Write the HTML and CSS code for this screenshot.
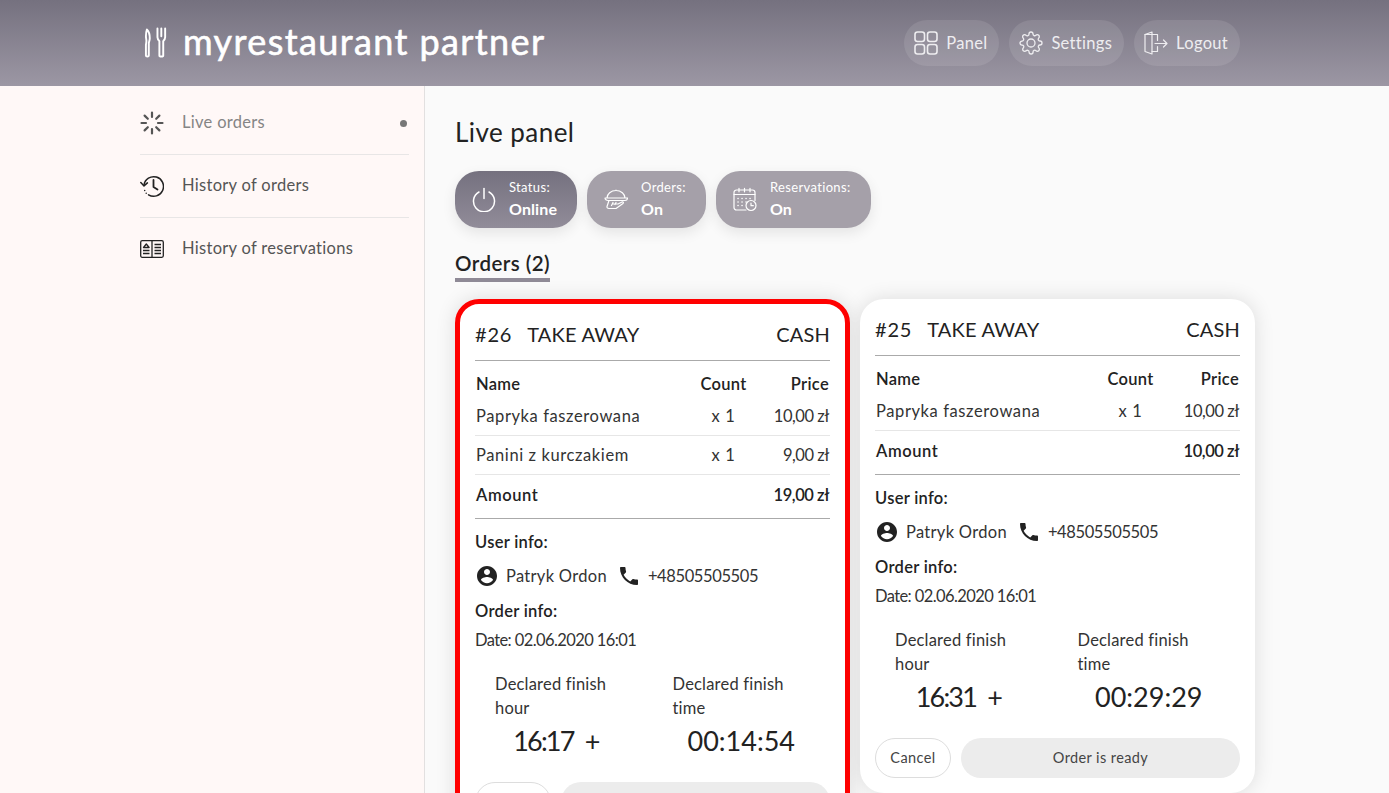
FILE: index.html
```html
<!DOCTYPE html>
<html lang="en">

<head>
  <meta charset="UTF-8">
  <title>myrestaurant partner</title>
  <link rel="stylesheet" href="styles.css">
</head>

<body>
  <svg class="sprites" width="0" height="0">
    <symbol id="i-user" viewBox="0 0 24 24">
      <path fill="currentColor" d="M12 2C6.48 2 2 6.48 2 12s4.480 10 10 10 10-4.48 10-10S17.520 2 12 2zm0 3c1.660 0 3 1.340 3 3s-1.340 3-3 3-3-1.340-3-3 1.340-3 3-3zm0 14.200c-2.500 0-4.710-1.280-6-3.220.03-1.990 4-3.080 6-3.080 1.990 0 5.970 1.090 6 3.080-1.290 1.940-3.500 3.220-6 3.220z" />
    </symbol>
    <symbol id="i-phone" viewBox="0 0 24 24">
      <path fill="currentColor" d="M6.620 10.790c1.440 2.830 3.760 5.140 6.590 6.590l2.200-2.200c.27-.27.67-.36 1.020-.24 1.120.37 2.330.57 3.570.57.55 0 1 .45 1 1V20c0 .55-.45 1-1 1-9.390 0-17-7.610-17-17 0-.55.45-1 1-1h3.500c.55 0 1 .45 1 1 0 1.250.2 2.450.57 3.570.11.35.03.74-.25 1.020l-2.200 2.200z" />
    </symbol>
  </svg>

  <header class="topbar">
    <a class="logo" href="#">
      <svg class="logo-icon" viewBox="0 0 26 32" fill="none" stroke="#fff" stroke-width="2" stroke-linejoin="round" stroke-linecap="round">
        <path d="M3 2c2 2 3 5 3 9 0 2-.6 3.500-1 5v13c0 1.500-3 1.500-3 0v-11c0-1 .5-2 .5-4 0-2-.5-3-.5-5 0-3 .3-5 1-7z" />
        <path d="M14 1v9c0 2 1 3 2 4v15c0 1.500 4 1.500 4 0v-15c1-1 2-2 2-4v-9M18 1v8" />
      </svg>
      <span class="logo-text">myrestaurant partner</span>
    </a>
    <nav class="topnav">
      <a class="topnav-btn" href="#">
        <svg viewBox="0 0 24 24" fill="none" stroke="currentColor" stroke-width="1.600">
          <rect x="1" y="1" width="9.500" height="9.500" rx="2.500" />
          <rect x="13.500" y="1" width="9.500" height="9.500" rx="2.500" />
          <rect x="1" y="13.500" width="9.500" height="9.500" rx="2.500" />
          <rect x="13.500" y="13.500" width="9.500" height="9.500" rx="2.500" />
        </svg>
        Panel
      </a>
      <a class="topnav-btn" href="#">
        <svg viewBox="0 0 24 24" fill="none" stroke="currentColor" stroke-width="1.300">
          <circle cx="12" cy="12" r="4" />
          <path d="M19.400 15a1.650 1.650 0 0 0 .33 1.820l.06.06a2 2 0 0 1 0 2.830 2 2 0 0 1-2.830 0l-.06-.06a1.650 1.650 0 0 0-1.820-.33 1.650 1.650 0 0 0-1 1.510V21a2 2 0 0 1-2 2 2 2 0 0 1-2-2v-.09A1.650 1.650 0 0 0 9 19.400a1.650 1.650 0 0 0-1.820.33l-.06.06a2 2 0 0 1-2.830 0 2 2 0 0 1 0-2.830l.06-.06a1.650 1.650 0 0 0 .33-1.820 1.650 1.650 0 0 0-1.510-1H3a2 2 0 0 1-2-2 2 2 0 0 1 2-2h.09A1.650 1.650 0 0 0 4.600 9a1.650 1.650 0 0 0-.33-1.820l-.06-.06a2 2 0 0 1 0-2.830 2 2 0 0 1 2.830 0l.06.06a1.650 1.650 0 0 0 1.820.33H9a1.650 1.650 0 0 0 1-1.510V3a2 2 0 0 1 2-2 2 2 0 0 1 2 2v.09a1.650 1.650 0 0 0 1 1.510 1.650 1.650 0 0 0 1.820-.33l.06-.06a2 2 0 0 1 2.830 0 2 2 0 0 1 0 2.830l-.06.06a1.650 1.650 0 0 0-.33 1.820V9a1.650 1.650 0 0 0 1.510 1H21a2 2 0 0 1 2 2 2 2 0 0 1-2 2h-.09a1.650 1.650 0 0 0-1.510 1z" />
        </svg>
        Settings
      </a>
      <a class="topnav-btn" href="#">
        <svg viewBox="0 0 24 24" fill="none" stroke="currentColor" stroke-width="1.200" stroke-linejoin="round" stroke-linecap="round">
          <path d="M1 3.500h12.500v6M13.500 15.500v5H8" />
          <path d="M1 3.500l7 -2.500v22l-7 -2.500z" />
          <path d="M11 12.500h12M19.500 9l3.500 3.500l-3.500 3.500" />
        </svg>
        Logout
      </a>
    </nav>
  </header>

  <div class="page">
    <aside class="sidebar">
      <a class="side-item side-item-active" href="#">
        <svg viewBox="0 0 24 24" fill="none" stroke="#555" stroke-width="2.200" stroke-linecap="round">
          <path d="M12 1.500v4.500M12 18v4.500M1.500 12h4.500M18 12h4.500M4.600 4.600l3.200 3.200M16.200 16.200l3.200 3.200M4.600 19.400l3.200-3.200M16.200 7.800l3.200-3.200" />
        </svg>
        <span>Live orders</span>
        <i class="side-dot"></i>
      </a>
      <a class="side-item" href="#">
        <svg viewBox="0 0 24 24" fill="none" stroke="#222" stroke-width="1.500" stroke-linecap="round" stroke-linejoin="round">
          <path d="M4 11a9.800 9.800 0 1 1 4.500 9.800" />
          <path d="M.8 8.500l3.200 3.400l3.400-3" />
          <path d="M13.500 6v7l4 2.500" stroke-width="1.800" />
          <path d="M4.700 16.500v.1M6.200 19.200v.1" />
        </svg>
        <span>History of orders</span>
      </a>
      <a class="side-item" href="#">
        <svg viewBox="0 0 24 24" fill="none" stroke="#222" stroke-width="1.300" stroke-linejoin="round">
          <rect x=".7" y="3.700" width="22.600" height="16.600" rx="1.500" />
          <path d="M12 3.700v16.600M14.500 7.500h6.500M14.500 10.500h6.500M14.500 13.500h6.500M14.500 16.500h6.500M3 13.500h6.500M3 16.500h6.500M3.500 10.500l2.800-3.500l2.800 3.500z" />
        </svg>
        <span>History of reservations</span>
      </a>
    </aside>

    <main class="content">
      <h1 class="page-title">Live panel</h1>

      <div class="status-row">
        <div class="status-pill status-pill-dark">
          <svg viewBox="0 0 24 24" fill="none" stroke="#fff" stroke-width="1.500" stroke-linecap="round">
            <path d="M7 4.500a10.500 10.500 0 1 0 10 0" />
            <path d="M12 1v10" />
          </svg>
          <div class="status-text">
            <span>Status:</span>
            <b>Online</b>
          </div>
        </div>
        <div class="status-pill">
          <svg viewBox="0 0 24 24" fill="none" stroke="#fff" stroke-width="1.200" stroke-linecap="round" stroke-linejoin="round">
            <path d="M3 10.500a9 7.500 0 0 1 18 0M12 3v-.5M1 10.500h22.500c0 1.500-.8 2.500-2.500 2.500h-17c-1.500 0-3-1-3-2.500z" />
            <path d="M5 13l-2 6c-.3 1 .5 2 2 2h7l7-5c1-1 0-2-1-1.500l-4 2h-5M9 15l-1.500 3M12 15l-1 2" />
          </svg>
          <div class="status-text">
            <span>Orders:</span>
            <b>On</b>
          </div>
        </div>
        <div class="status-pill">
          <svg viewBox="0 0 24 24" fill="none" stroke="#fff" stroke-width="1.200" stroke-linecap="round" stroke-linejoin="round">
            <path d="M13 22.500h-9.500a2.500 2.500 0 0 1-2.500-2.500v-15a2.500 2.500 0 0 1 2.500-2.500h16a2.500 2.500 0 0 1 2.500 2.500v8" />
            <path d="M1 7h21M6 .8v3.500M11.500 .8v3.500M17 .8v3.500" />
            <path d="M5 11h.1M9 11h.1M13 11h.1M17 11h.1M5 14.500h.1M9 14.500h.1M13 14.500h.1M5 18h.1M9 18h.1" stroke-width="1.500" />
            <circle cx="18" cy="18" r="5" />
            <path d="M18 15.500v2.700h2.300" />
          </svg>
          <div class="status-text">
            <span>Reservations:</span>
            <b>On</b>
          </div>
        </div>
      </div>

      <h2 class="section-title"><span>Orders (2)</span></h2>

      <div class="orders">
        <article class="order order-new">
          <div class="order-head">
            <span class="order-no">#26</span>
            <span class="order-type">TAKE AWAY</span>
            <span class="order-pay">CASH</span>
          </div>
          <table class="items">
            <tr class="items-head">
              <th class="col-name">Name</th>
              <th class="col-count">Count</th>
              <th class="col-price">Price</th>
            </tr>
            <tr>
              <td class="col-name">Papryka faszerowana</td>
              <td class="col-count">x 1</td>
              <td class="col-price">10,00 zł</td>
            </tr>
            <tr>
              <td class="col-name">Panini z kurczakiem</td>
              <td class="col-count">x 1</td>
              <td class="col-price">9,00 zł</td>
            </tr>
            <tr class="items-total">
              <td class="col-name">Amount</td>
              <td class="col-count"></td>
              <td class="col-price">19,00 zł</td>
            </tr>
          </table>
          <h3 class="info-title">User info:</h3>
          <div class="user-row">
            <svg class="user-icon"><use href="#i-user" /></svg>
            <span class="user-name">Patryk Ordon</span>
            <svg class="user-icon"><use href="#i-phone" /></svg>
            <span class="user-phone">+48505505505</span>
          </div>
          <h3 class="info-title">Order info:</h3>
          <p class="order-date">Date: 02.06.2020 16:01</p>
          <div class="finish">
            <div class="finish-col">
              <p class="finish-label">Declared finish hour</p>
              <p class="finish-value finish-hour">16:17 <span class="plus">+</span></p>
            </div>
            <div class="finish-col">
              <p class="finish-label">Declared finish time</p>
              <p class="finish-value">00:14:54</p>
            </div>
          </div>
          <div class="order-actions">
            <button class="btn-cancel">Cancel</button>
            <button class="btn-ready">Order is ready</button>
          </div>
        </article>

        <article class="order">
          <div class="order-head">
            <span class="order-no">#25</span>
            <span class="order-type">TAKE AWAY</span>
            <span class="order-pay">CASH</span>
          </div>
          <table class="items">
            <tr class="items-head">
              <th class="col-name">Name</th>
              <th class="col-count">Count</th>
              <th class="col-price">Price</th>
            </tr>
            <tr>
              <td class="col-name">Papryka faszerowana</td>
              <td class="col-count">x 1</td>
              <td class="col-price">10,00 zł</td>
            </tr>
            <tr class="items-total">
              <td class="col-name">Amount</td>
              <td class="col-count"></td>
              <td class="col-price">10,00 zł</td>
            </tr>
          </table>
          <h3 class="info-title">User info:</h3>
          <div class="user-row">
            <svg class="user-icon"><use href="#i-user" /></svg>
            <span class="user-name">Patryk Ordon</span>
            <svg class="user-icon"><use href="#i-phone" /></svg>
            <span class="user-phone">+48505505505</span>
          </div>
          <h3 class="info-title">Order info:</h3>
          <p class="order-date">Date: 02.06.2020 16:01</p>
          <div class="finish">
            <div class="finish-col">
              <p class="finish-label">Declared finish hour</p>
              <p class="finish-value finish-hour">16:31 <span class="plus">+</span></p>
            </div>
            <div class="finish-col">
              <p class="finish-label">Declared finish time</p>
              <p class="finish-value">00:29:29</p>
            </div>
          </div>
          <div class="order-actions">
            <button class="btn-cancel">Cancel</button>
            <button class="btn-ready">Order is ready</button>
          </div>
        </article>
      </div>
    </main>
  </div>
</body>

</html>
```

FILE: styles.css
```css
* {
  box-sizing: border-box;
  margin: 0;
  padding: 0;
}

html,
body {
  height: 100%;
  overflow: hidden;
}

body {
  display: flex;
  flex-direction: column;
  font-family: "Lato", "Noto Sans", sans-serif;
  font-size: 16.5px;
  letter-spacing: .6px;
  color: #333;
  background: #fafafa;
}

a {
  color: inherit;
  text-decoration: none;
}

.sprites {
  display: none;
}

/* top bar */
.topbar {
  flex: none;
  height: 86px;
  display: flex;
  align-items: center;
  justify-content: space-between;
  padding: 0 149px 0 144px;
  background: linear-gradient(#75717f, #9c97a4);
}

.logo {
  display: flex;
  align-items: center;
  color: #fff;
}

.logo-icon {
  width: 25px;
  height: 32px;
  margin-right: 14px;
}

.logo-text {
  padding-bottom: 5px;
  font-size: 36px;
  letter-spacing: 1.400px;
  line-height: 40px;
  -webkit-text-stroke: .6px #fff;
}

.topnav {
  display: flex;
  gap: 10px;
}

.topnav-btn {
  height: 46px;
  display: flex;
  align-items: center;
  gap: 8px;
  padding: 0 12px 0 10px;
  border-radius: 23px;
  background: rgba(255, 255, 255, .1);
  color: #eeedf0;
  letter-spacing: .3px;
}

.topnav-btn svg {
  width: 24px;
  height: 24px;
}

/* page columns */
.page {
  flex: 1;
  min-height: 0;
  display: flex;
}

.sidebar {
  flex: none;
  width: 425px;
  padding: 6px 15px 0 140px;
  background: #fff8f7;
  border-right: 1px solid #e2e0e0;
}

.side-item {
  height: 63px;
  display: flex;
  align-items: center;
  gap: 18px;
  color: #555;
  letter-spacing: .3px;
  border-bottom: 1px solid #e8e6e6;
}

.side-item span {
  padding-bottom: 2px;
}

.side-item:last-child {
  border-bottom-color: transparent;
}

.side-item svg {
  flex: none;
  width: 24px;
  height: 24px;
}

.side-item-active {
  color: #858585;
}

.side-dot {
  width: 7px;
  height: 7px;
  margin-left: auto;
  margin-right: 2px;
  border-radius: 50%;
  background: #777;
}

/* main area */
.content {
  flex: 1;
  min-width: 0;
  padding: 30px 0 0 30px;
}

.page-title {
  font-size: 26px;
  font-weight: 400;
  letter-spacing: .45px;
  line-height: 32px;
  color: #222;
}

.status-row {
  display: flex;
  gap: 10px;
  margin-top: 23px;
}

.status-pill {
  height: 57px;
  display: flex;
  align-items: center;
  gap: 13px;
  padding: 0 20px 0 17px;
  border-radius: 24px;
  background: #a5a0a9;
  color: #fff;
  box-shadow: 0 5px 14px rgba(0, 0, 0, .09);
}

.status-pill-dark {
  background: linear-gradient(#75717f, #918c99);
}

.status-pill svg {
  flex: none;
  width: 24px;
  height: 25px;
}

.status-text {
  display: flex;
  flex-direction: column;
  gap: 2px;
  padding-bottom: 2px;
  font-size: 13px;
  letter-spacing: .35px;
  line-height: 18px;
}

.status-text b {
  font-size: 16px;
  letter-spacing: .1px;
  line-height: 22px;
}

.section-title {
  margin-top: 22px;
  font-size: 20.500px;
  font-weight: 600;
  letter-spacing: .45px;
  line-height: 26px;
  color: #222;
}

.section-title span {
  display: inline-block;
  padding-bottom: 2px;
  border-bottom: 4px solid #8f8a96;
}

.orders {
  display: flex;
  gap: 10px;
  align-items: flex-start;
  margin-top: 17px;
}

.order {
  flex: none;
  width: 395px;
  padding: 15px;
  border-radius: 24px;
  background: #fff;
  box-shadow: 0 0 20px rgba(0, 0, 0, .12);
}

.order-new {
  border: 5px solid #f00;
}

.order-head {
  height: 42px;
  display: flex;
  align-items: center;
  padding-bottom: 12px;
  border-bottom: 1px solid #aaa;
  font-size: 20px;
  letter-spacing: .2px;
  color: #222;
}

.order-no {
  margin-right: 15px;
  letter-spacing: .8px;
}

.order-pay {
  margin-left: auto;
}

.items {
  width: 100%;
  border-collapse: collapse;
  table-layout: fixed;
  border-bottom: 1px solid #aaa;
}

.items th,
.items td {
  height: 39px;
}

.items td {
  padding-top: 1px;
}

.items th {
  height: 35px;
  padding-top: 10px;
  font-weight: 600;
  letter-spacing: .3px;
  color: #222;
}

.items tr + tr:not(.items-total) td {
  border-bottom: 1px solid #e6e6e6;
}

.items-total td {
  height: 44px;
  padding-bottom: 4px;
  font-weight: 600;
  color: #222;
}

.items .col-name {
  width: 60%;
  padding-left: 1px;
  text-align: left;
}

.items .col-count {
  width: 20%;
  text-align: center;
}

.items .col-price {
  width: 20%;
  text-align: right;
  padding-right: 1px;
  letter-spacing: -.45px;
  white-space: nowrap;
}

.items th.col-price {
  letter-spacing: .3px;
}

.info-title {
  margin-top: 11px;
  font-size: 16.500px;
  font-weight: 600;
  letter-spacing: .3px;
  line-height: 24px;
  color: #222;
}

.user-row {
  display: flex;
  align-items: center;
  gap: 7px;
  height: 24px;
  margin-top: 10px;
}

.user-icon {
  width: 24px;
  height: 24px;
  color: #222;
}

.user-name {
  margin-right: 3px;
  letter-spacing: .3px;
}

.user-phone {
  letter-spacing: -.38px;
}

.order-date {
  margin-top: 5px;
  line-height: 24px;
  letter-spacing: -.6px;
}

.finish {
  display: flex;
  margin-top: 20px;
}

.finish-col {
  flex: 1 1 0;
  padding: 0 20px;
}

.finish-label {
  line-height: 24px;
  letter-spacing: .2px;
}

.finish-value {
  margin-top: 3px;
  font-size: 27px;
  letter-spacing: 0;
  line-height: 36px;
  text-align: center;
  color: #222;
}

.finish-hour {
  padding-right: 14px;
  letter-spacing: -1.800px;
}

.plus {
  margin-left: 6px;
  letter-spacing: 0;
}

.order-actions {
  display: flex;
  gap: 10px;
  margin-top: 23px;
}

.order-actions button {
  height: 40px;
  border-radius: 20px;
  font-family: inherit;
  font-size: 14.500px;
  letter-spacing: .4px;
  color: #444;
}

.btn-cancel {
  flex: none;
  width: 76px;
  background: #fff;
  border: 1px solid #ddd;
}

.btn-ready {
  flex: 1;
  background: #ececec;
  border: 0;
}
```
